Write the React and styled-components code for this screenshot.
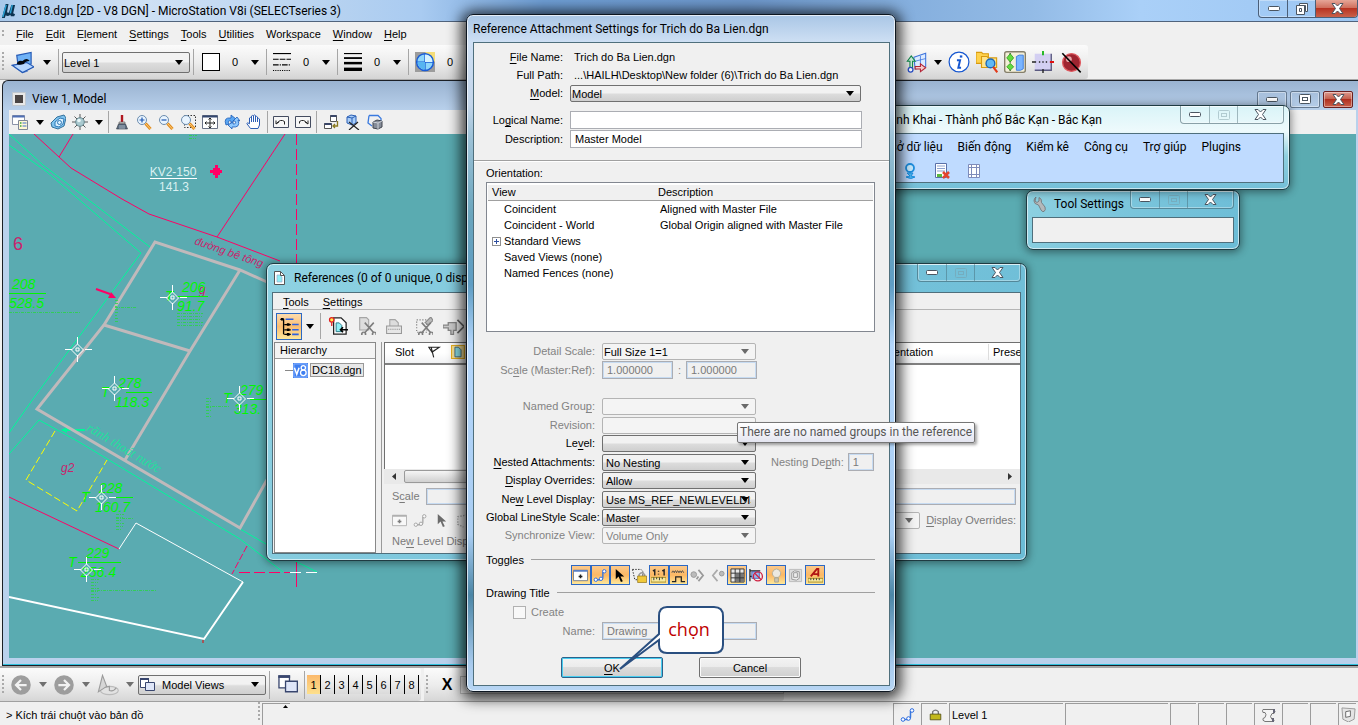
import React from 'react';
import styled, { createGlobalStyle, css } from 'styled-components';

const ui = '"Liberation Sans", Arial, sans-serif';
const caption = 'Roboto, "Noto Sans", sans-serif';

const GlobalStyle = createGlobalStyle`
  *, *::before, *::after { box-sizing: border-box; }
  body { margin: 0; background: #f0f0f0; font: 11px/16px ${ui}; color: #000; overflow: hidden; }
  button, input, select { font: inherit; color: inherit; margin: 0; }
  button { padding: 0; border: 0; background: none; }
  u { text-underline-offset: 2px; }
  svg { display: block; flex: none; }
`;

/* ---------- icons ---------- */

const glass = (
  <>
    <circle cx="6" cy="6" r="4.5" fill="#e8f4ff" stroke="#6b8cae" />
    <path d="M9.5 9.5l5 5.5" stroke="#e08a1e" strokeWidth="3" />
    <path d="M9.5 9.5l5 5.5" stroke="#ffd27a" strokeWidth="1" />
  </>
);
const smartLine = (
  <>
    <path d="M3 12.5h4.5q3 0 3-3V4" fill="none" stroke="#3b78dc" strokeWidth="1.5" />
    <circle cx="3" cy="12.5" r="1.8" fill="#fff" stroke="#2a6ae0" />
    <circle cx="8.5" cy="11.5" r="1.8" fill="#fff" stroke="#2a6ae0" />
    <circle cx="12" cy="3.5" r="1.8" fill="#fff" stroke="#2a6ae0" />
  </>
);
const scissors = (
  <path d="M6 5l8 9M14 5l-8 9M5 13.5a1.7 1.7 0 1 0 .1 0M14.5 13.5a1.7 1.7 0 1 0 .1 0" fill="none" stroke="#7d7d7d" strokeWidth="1.4" />
);
const wins = (
  <>
    <path d="M1.5 1.5h8v9h-8z" fill="#fff" stroke="#39466e" />
    <path d="M1 2h9" stroke="#39466e" strokeWidth="2" />
    <path d="M6.500 5.500h9v8h-9z" fill="#dfe6f8" stroke="#39466e" />
  </>
);

const icons = {
  app: (
    <>
      <path d="M5 1h3L6.500 9q0 2 2 1L11 2h4l-2 9 2 1-1 2h-3.500l-.5-1.500Q7 15 5 13l-1 3H1z" fill="#0d3350" />
      <path d="M5.500 2L2 15M12 2l-2 9" stroke="#2aa3d8" strokeWidth="1.500" fill="none" />
    </>
  ),
  level: (
    <>
      <path d="M1 10l5-1 5 5-3 1z" fill="#e8f1ff" stroke="#5b84c8" />
      <path d="M4 3l10-2v8L5 11z" fill="#6fb2f6" stroke="#2458b4" strokeWidth=".8" />
      <path d="M1 10l7 5 8-4-5-3z" fill="#b8d8ff" stroke="#2458b4" strokeWidth=".8" />
      <path d="M4 9q1-3 4-2 3-3 5 0-3 0-4 2-3 1-5 0z" fill="#05080f" />
    </>
  ),
  styles: (
    <g stroke="#000" strokeWidth="1">
      <path d="M0 .5h16" />
      <path d="M0 5.500h16" strokeDasharray="5 1" />
      <path d="M0 10.500h16" strokeDasharray="5 1 1 1" />
      <path d="M0 15.500h16" strokeDasharray="1 1" />
    </g>
  ),
  weights: (
    <g stroke="#000">
      <path d="M0 .5h16" />
      <path d="M0 4.500h16" strokeWidth="1.600" />
      <path d="M0 9h16" strokeWidth="2.200" />
      <path d="M0 14.500h16" strokeWidth="3" />
    </g>
  ),
  globe: (
    <>
      <path d="M0 0h16v16H0z" fill="#9c9c9c" />
      <path d="M8 0h8v8z" fill="#f4dd78" />
      <circle cx="8" cy="8" r="6.700" fill="#8fd7fa" stroke="#1a5cd6" strokeWidth="1.200" />
      <path d="M8 1.500v13M1.500 8h13" stroke="#1a5cd6" strokeWidth="1" />
      <path d="M8 8V2a6 6 0 0 1 6 6z" fill="#d7f2ff" />
      <path d="M8 8v6a6 6 0 0 1-6-6z" fill="#57b5f1" />
    </>
  ),
  acs: (
    <>
      <path d="M6 4l9-3v10l-8 2z" fill="#dcebff" stroke="#3b72dc" strokeWidth=".8" />
      <path d="M7 7l8-2M11 3v9" stroke="#3b72dc" strokeWidth=".6" />
      <path d="M3 12V7H1l3-4 3 4H5v5z" fill="#cfeedd" stroke="#108a4c" strokeWidth=".8" />
      <path d="M7 11h4V9l4 3-4 3v-2H7z" fill="#f7caca" stroke="#b32638" strokeWidth=".8" />
      <circle cx="3.500" cy="13.500" r="1.800" fill="#fff" stroke="#2a50c8" />
    </>
  ),
  info: (
    <>
      <circle cx="8" cy="8" r="7.200" fill="#fff" stroke="#1556d0" strokeWidth=".9" />
      <path d="M9.500 3.200v1.600" stroke="#1556d0" strokeWidth="1.800" />
      <path d="M6.500 6.700h2.300l-1.300 5.500h2" stroke="#1556d0" strokeWidth="1.400" fill="none" />
    </>
  ),
  folderFind: (
    <>
      <path d="M0 1h4l1 1h4v7H0z" fill="#ffd24c" stroke="#d89a10" strokeWidth=".8" />
      <path d="M4 4h4l1 1h6v7H4z" fill="#ffe48a" stroke="#d89a10" strokeWidth=".8" />
      <circle cx="10.500" cy="9" r="3.200" fill="#5fb9f5" stroke="#1c66b8" />
      <path d="M12.500 11.500l3 4" stroke="#e23a1a" strokeWidth="1.600" />
    </>
  ),
  panels: (
    <>
      <rect x=".5" y=".5" width="15" height="15" rx="1.500" fill="#f4efd8" stroke="#857f6a" />
      <path d="M4.500 1.500v13" stroke="#555" strokeDasharray="1 1" />
      <path d="M4.500 2l2.500 3-2.500 3L2 5zM4.500 9l2.500 2.500-2.500 2.500L2 11.500z" fill="#63db3f" stroke="#2a9b18" strokeWidth=".6" />
      <path d="M9 4l2-1h3v10l-2 1H9z" fill="#7ab5ff" stroke="#3f7fe0" strokeWidth=".7" />
    </>
  ),
  lockSquare: (
    <>
      <path d="M2 2h12v12H2z" fill="#d3cff2" />
      <path d="M2 14h12V2" fill="none" stroke="#5b5a80" />
      <path d="M0 8h3M8 13v3" stroke="#222" />
      <path d="M8 0v3" stroke="#12b312" strokeWidth="1.300" />
      <path d="M13 8h3" stroke="#e01010" strokeWidth="1.500" />
      <path d="M5 8h1M7.500 8h1M10 8h1" stroke="#222" />
    </>
  ),
  noBall: (
    <>
      <circle cx="8" cy="8" r="6.800" fill="#9e2430" stroke="#e05a60" />
      <circle cx="6" cy="5.500" r="2.200" fill="#e7a9ab" />
      <path d="M1 1l14 14.500" stroke="#000" strokeWidth="1.200" />
    </>
  ),
  viewAttr: (
    <>
      <path d="M.5 1.500h12v9H.5z" fill="#fff" stroke="#8b93a8" />
      <path d="M.5 2.500h12" stroke="#4f6fb5" strokeWidth="2" />
      <path d="M6.500 6.500h9v9h-9z" fill="#fff7d2" stroke="#7f8798" />
      <path d="M8 9h1.500M8 12h1.500" stroke="#39a339" strokeWidth="1.500" />
      <path d="M10.500 9h4M10.500 12h4" stroke="#3f6fd0" />
    </>
  ),
  render: (
    <>
      <path d="M1 9l6-6 7-2 2 3-2 8-6 3-6-2z" fill="#7fc3ee" stroke="#34719c" />
      <path d="M5 8l5-4 4 1-1 5-4 3-4-1z" fill="#d9f0ff" stroke="#2f7ab8" />
      <circle cx="9.500" cy="8.500" r="2" fill="none" stroke="#2f7ab8" />
    </>
  ),
  sun: (
    <>
      <path d="M8 0v16M0 8h16M2.500 2.500l11 11M13.500 2.500l-11 11" stroke="#585858" />
      <circle cx="8" cy="8" r="4.300" fill="#a9c9cf" stroke="#67878f" />
      <circle cx="7" cy="6.500" r="1.800" fill="#e8f6f8" />
    </>
  ),
  brush: (
    <>
      <path d="M8 1v7" stroke="#b01820" strokeWidth="2.400" />
      <path d="M5 8h6v2H5z" fill="#c9c9c9" stroke="#555" strokeWidth=".6" />
      <path d="M4.500 10h7l2 5h-11z" fill="#5a6c80" stroke="#2f3740" strokeWidth=".6" />
      <path d="M6 11v4M8 11v4M10 11v4" stroke="#c8d2dc" strokeWidth=".7" />
    </>
  ),
  zoomIn: <>{glass}<path d="M3.500 6h5M6 3.500v5" stroke="#1c55b0" strokeWidth="1.200" /></>,
  zoomOut: <>{glass}<path d="M3.500 6h5" stroke="#1c55b0" strokeWidth="1.200" /></>,
  zoomWin: <><path d="M4.500 1.500h11v12h-11z" fill="none" stroke="#333" strokeDasharray="1.500 1.500" />{glass}</>,
  fit: (
    <>
      <path d="M.5 1.500h15v13H.5z" fill="#fff" stroke="#6a7286" />
      <path d="M.5 2.500h15" stroke="#34476f" strokeWidth="2" />
      <path d="M8 4v10M3 9h10M6.500 5.500L8 4l1.500 1.500M6.500 12.500L8 14l1.500-1.500M4.500 7.500L3 9l1.500 1.500M11.500 7.500L13 9l-1.500 1.500" stroke="#222" fill="none" />
    </>
  ),
  rotate: (
    <>
      <path d="M2 11Q-1 3 7 4V1l5 4-5 4V7Q3 6 5 10z" fill="#5aa6f2" stroke="#1b5cb8" strokeWidth=".8" />
      <path d="M14 6q3 8-6 7v2l-4-4 5-3v2q4 0 2-3H9l4-4 3 4z" fill="#8ec8ff" stroke="#1b5cb8" strokeWidth=".8" />
    </>
  ),
  hand: <path d="M4.500 14.500L.8 9.500q.7-1.500 2.700.3V4q1-1.200 2 0V2q1-1.200 2 0v-.5q1-1.200 2 0V3q1-1.200 2 0v2q1-1.200 2 0v6l-1.500 3.500z M5.500 4v4M7.500 2v6M9.500 2.500V8M11.500 4v4" fill="#fff" stroke="#2c5db4" />,
  viewPrev: (
    <>
      <path d="M.5 2.500h15v11H.5z" fill="#f6f6f6" stroke="#444c60" />
      <path d="M3 10l3-2M3 10V6.500M3.500 9.500q4-5 8-2l0 3" fill="none" stroke="#222" />
    </>
  ),
  viewNext: (
    <>
      <path d="M.5 2.500h15v11H.5z" fill="#f6f6f6" stroke="#444c60" />
      <path d="M13 10l-3-2M13 10V6.500M12.500 9.500q-4-5-8-2l0 2" fill="none" stroke="#222" />
    </>
  ),
  copyView: (
    <>
      <path d="M7.500 1.500h6v6h-6zM1.500 9.500h7v5h-7z" fill="#fff" stroke="#555" />
      <path d="M1.500 10h7M7.500 2h6" stroke="#3a4668" strokeWidth="2" />
      <path d="M14.500 7v5h-4M12 10l-2 2 2 2" stroke="#8a7a22" fill="none" strokeWidth="1.300" />
    </>
  ),
  clip: (
    <>
      <path d="M2 3l4-2 5 1v7l-4 2-5-2z" fill="#a8cdf8" stroke="#2b5fb5" />
      <path d="M2 3l5 1v7M7 4l4-2" stroke="#2b5fb5" fill="none" />
      <path d="M4 8l10 8M13 8l-9 8" stroke="#222" strokeWidth="1.200" />
    </>
  ),
  clipMask: (
    <>
      <path d="M2 1.500h9l3 3V8M2 1.500L1 9l4 3" fill="none" stroke="#3a7adf" strokeWidth="1.300" />
      <path d="M6 8l4-2 5 1v6l-4 2-5-1z" fill="#858c98" stroke="#40454e" />
      <path d="M6 8l5 1v6M11 9l4-2" fill="none" stroke="#cdd1d8" />
    </>
  ),
  doc: (
    <>
      <path d="M2.500 1.500h6l4 4v9h-10z" fill="#fff" stroke="#555" />
      <path d="M5 5h3l2 2v5H5z" fill="#8ff0f6" stroke="#9ac" strokeWidth=".7" />
      <path d="M8.500 1.500v4h4" fill="none" stroke="#555" />
    </>
  ),
  tree: (
    <>
      <path d="M3.500 3v11" stroke="#000" />
      <path d="M1 2.500h3M4 6.500h5M4 10.500h5M4 14h5" stroke="#000" strokeWidth="1" />
      <path d="M6 6.500h2M6 10.500h2M6 14h2M1.500 2.500h2" stroke="#000" strokeWidth="2" />
      <path d="M5 2.500h6M10 6.500h5M10 10.500h5M10 14h5" stroke="#2f62e0" strokeWidth="1.200" />
    </>
  ),
  attach: (
    <>
      <path d="M4.500 1.500h6l4 4v9h-10z" fill="#fff" stroke="#222" />
      <path d="M6.500 5.500h2.500l2 2v5H6.500z" fill="#8ff0f6" stroke="#2c7f8c" strokeWidth=".8" />
      <path d="M16 11h-6M12 9l-2 2 2 2" stroke="#000" strokeWidth="1.300" fill="none" />
      <circle cx="3" cy="3" r="1.800" fill="#ffe94a" stroke="#e02020" />
      <path d="M3 5v3" stroke="#e02020" />
    </>
  ),
  cutDoc: <><path d="M1.500.5h6l2 2v9h-8z" fill="#ddd" stroke="#a5a5a5" />{scissors}</>,
  printDoc: (
    <>
      <path d="M4.500 1.500h5l3 3v4h-8z" fill="#ddd" stroke="#a5a5a5" />
      <path d="M1.500 7.500h14v7h-14z" fill="#e6e6e6" stroke="#999" />
      <path d="M3 10.500h11" stroke="#888" strokeDasharray="1 1" />
    </>
  ),
  cutBrush: (
    <>
      <path d="M1.500 2.500h9v11h-9z" fill="none" stroke="#777" strokeDasharray="1 1.500" />
      <path d="M9 5l5-5 2 3-4 4z" fill="#bbb" stroke="#8a8a8a" />
      {scissors}
    </>
  ),
  key: (
    <>
      <path d="M11 3l5 5-5 5" fill="none" stroke="#666" strokeWidth="1.300" />
      <path d="M0 7h4V5h6v6H8v3H6v-3H4V9H0z" fill="#c9c9c9" stroke="#858585" />
    </>
  ),
  flag: <path d="M1 1.500h13L5 7.500zM4 2l3 12" fill="none" stroke="#222" strokeWidth="1.400" />,
  docTab: (
    <>
      <path d="M.5.5h15v15H.5z" fill="#fbe59a" stroke="#e8b020" strokeWidth="1.500" />
      <path d="M4.500 2.500h4l3 3v8h-7z" fill="#8fe6ee" stroke="#39617a" />
    </>
  ),
  v8: (
    <>
      <path d="M0 0h16v16H0z" fill="#3f7ff0" />
      <path d="M1 1h14v14H1z" fill="none" stroke="#8db6ff" />
      <path d="M1.500 5l2.500 7 2.500-7" fill="none" stroke="#fff" strokeWidth="1.600" />
      <circle cx="11" cy="5" r="2.300" fill="none" stroke="#fff" strokeWidth="1.400" />
      <circle cx="11" cy="10.500" r="3" fill="none" stroke="#fff" strokeWidth="1.400" />
    </>
  ),
  display: (
    <>
      <path d="M.5 2.500h15v11H.5z" fill="#fff" stroke="#76808f" />
      <path d="M.5 3h15" stroke="#5a7fc4" strokeWidth="2" />
      <path d="M8 7v4M6 9h4" stroke="#222" strokeWidth="1.600" />
    </>
  ),
  snap: smartLine,
  pointer: <path d="M4 1v11l3-3 2.500 6 2-1-2.500-5h4z" fill="#000" />,
  rasterLock: (
    <>
      <path d="M.5 1.500h9l2 2v9H3z" fill="none" stroke="#222" strokeDasharray="1.500 1.500" />
      <path d="M7.500 9V7q3-4 6 0v2" fill="none" stroke="#9a9a9a" strokeWidth="1.500" />
      <path d="M6 8.500h9.500v7H6z" fill="#f1c93a" stroke="#8a6b10" strokeWidth=".7" />
    </>
  ),
  trueScale: (
    <>
      <path d="M2 3l2-1v6M12 3l2-1v6M8 3v1M8 6v1" stroke="#222" strokeWidth="1.500" fill="none" />
      <path d="M0 10h16v5H0z" fill="#f6e9a0" stroke="#a58d22" />
      <path d="M3 10v3M6 10v2M9 10v3M12 10v2" stroke="#333" />
    </>
  ),
  lineScale: (
    <>
      <path d="M1 5q1-4 2.500 0 1-4 2.500 0 1-4 2.500 0 1-4 2.500 0 1-4 2.500 0" fill="none" stroke="#444" />
      <path d="M1 14.500h4V9.500h6v5h4" fill="none" stroke="#222" strokeWidth="1.300" />
    </>
  ),
  clipBack: (
    <>
      <circle cx="4" cy="7" r="3" fill="#bbb" stroke="#999" />
      <path d="M9 2l5 6-5 6M9 9l-2 3" fill="none" stroke="#999" strokeWidth="1.800" />
    </>
  ),
  clipFront: (
    <>
      <circle cx="12.500" cy="6" r="2.500" fill="#bbb" stroke="#999" />
      <path d="M8 2L3 8l5 6" fill="none" stroke="#aaa" strokeWidth="1.800" />
    </>
  ),
  grid: (
    <>
      <path d="M1 1h14v14H1z" fill="#e8e8e8" stroke="#333" />
      <path d="M6 6h9v9H6z" fill="#777" />
      <path d="M5.500 1v14M10.500 1v14M1 5.500h14M1 10.500h14" stroke="#333" />
    </>
  ),
  noRaster: (
    <>
      <path d="M1 1v13M1 3h11M1 9h5" stroke="#222" strokeWidth="1.300" />
      <path d="M3 4h8v7H3z" fill="#9cb8f0" stroke="#2a4fa8" strokeWidth=".8" />
      <circle cx="9.500" cy="9" r="4.800" fill="none" stroke="#d02040" strokeWidth="1.400" />
      <path d="M6 5.500l7 7" stroke="#d02040" strokeWidth="1.400" />
    </>
  ),
  bulb: (
    <>
      <path d="M6 10Q3 7.500 3.500 5 5 1 8 1t4.500 4q.5 2.500-2.500 5z" fill="#ece9e0" stroke="#b5b09c" />
      <path d="M6 10.500h4V15H6z" fill="#c8c4b4" stroke="#aaa48c" />
    </>
  ),
  solid: (
    <>
      <path d="M1.500 1.500h13v13h-13z" fill="#ddd" stroke="#bbb" />
      <path d="M4 5l3-2 5 1v7l-3 2-5-1z" fill="#eee" stroke="#999" />
      <path d="M6 5h4v5H6z" fill="none" stroke="#999" />
    </>
  ),
  annot: (
    <>
      <path d="M3 9L9.500 1h1.500v8M6 6.500h5" fill="none" stroke="#b01414" strokeWidth="2" />
      <path d="M0 11h16v4H0z" fill="#f6e9a0" stroke="#a58d22" />
      <path d="M3 11v2M6 11v2M9 11v2M12 11v2" stroke="#333" />
    </>
  ),
  back: (
    <>
      <circle cx="8" cy="8" r="7.800" fill="#9d9d9d" />
      <path d="M12.500 8h-8M8 4L4 8l4 4" fill="none" stroke="#f2f2f2" strokeWidth="1.800" />
    </>
  ),
  forward: (
    <>
      <circle cx="8" cy="8" r="7.800" fill="#9d9d9d" />
      <path d="M3.500 8h8M8 4l4 4-4 4" fill="none" stroke="#f2f2f2" strokeWidth="1.800" />
    </>
  ),
  compass: (
    <>
      <ellipse cx="9" cy="12" rx="6.500" ry="3" fill="#e2e2e2" stroke="#bbb" strokeWidth=".8" />
      <path d="M4 10l5-1v3q3 1 5-2" fill="none" stroke="#999" strokeWidth=".8" />
      <path d="M1 13L4 1l3 8z" fill="#d6d6d6" stroke="#9a9a9a" strokeWidth=".8" />
    </>
  ),
  wins,
  wrench: <path d="M4 1L3 5l2 1.500L7 5V1.500q3 1 2.500 5L13 11q1 3-1 4.500-2 .5-3-1.500l-2.500-5Q2 8 2 5 2 2 4 1z" fill="#b4b8ba" stroke="#6c7073" strokeWidth=".8" />,
  person: (
    <>
      <circle cx="8" cy="5" r="4" fill="#c9ecff" stroke="#1d8fe0" strokeWidth="1.800" />
      <path d="M5 10h6l-2 3 4 1q-4 3-9 0l4-1z" fill="#49b7f4" stroke="#1d8fe0" />
    </>
  ),
  sheetX: (
    <>
      <path d="M1.500.5h11v14h-11z" fill="#fff" stroke="#5a70a8" />
      <path d="M3 3h8M3 5.500h8M3 8h8" stroke="#8fa3d0" />
      <path d="M3 11h5v3H3z" fill="#59b840" />
      <path d="M9 9l6 6M15 9l-6 6" stroke="#e2452e" strokeWidth="2.500" />
    </>
  ),
  sheetGrid: (
    <>
      <path d="M2.500 1.500h11v13h-11z" fill="#fff" stroke="#7f8cba" />
      <path d="M5.500 1v14M10.500 1v14M2 4.500h12M2 11.500h12" stroke="#7f8cba" />
    </>
  ),
  lock: (
    <>
      <path d="M4.500 8V4.500q3.500-4 7 0V8" fill="none" stroke="#777" strokeWidth="1.600" />
      <path d="M1.500 7.500h13v7h-13z" fill="#c2b81c" stroke="#4d4a10" />
    </>
  ),
  scroll: (
    <>
      <path d="M2 2.500h11q2 2 0 4l-2 0q-3 3 0 6h1q2 1 0 2H4q-3-1-2-3l2-1q2-3 0-5H2q-1-2 0-3z" fill="#f4f4f4" stroke="#777" />
      <path d="M13 2v4M12 11v4" stroke="#667" strokeWidth="2" />
    </>
  ),
  shield: (
    <>
      <path d="M1 1l14 1-1 11-6 3-6-3z" fill="#e4e4e4" stroke="#999" />
      <path d="M5 5l5-1v6l-5 1z" fill="#fafafa" stroke="#666" />
    </>
  ),
  fence: <path d="M13 2L3 4v8l6 3" fill="none" stroke="#777" strokeDasharray="1.500 1.500" strokeWidth="1.500" />,
};

const IconSvg = styled.svg`
  ${p => p.$faded && css`
    opacity: 0.55;
    filter: grayscale(1);
  `}
`;

const Icon = ({ name, size = 16, faded }) => (
  <IconSvg width={size} height={size} viewBox="0 0 16 16" $faded={faded} aria-hidden="true">
    {icons[name]}
  </IconSvg>
);

const Arrow = ({ color = '#000' }) => (
  <svg width="8" height="5" viewBox="0 0 8 5" aria-hidden="true">
    <path d="M0 0h8L4 5z" fill={color} />
  </svg>
);

// "&" marks the accelerator letter
const Label = ({ text }) => {
  const at = text.indexOf('&');
  if (at < 0) return text;
  return <>{text.slice(0, at)}<u>{text[at + 1]}</u>{text.slice(at + 2)}</>;
};

/* ---------- shared controls ---------- */

const ToolBtn = styled.button`
  display: flex;
  flex: none;
  align-items: center;
  justify-content: center;
  width: ${p => p.$w || 22}px;
  height: ${p => p.$h || 22}px;
`;

const Sep = styled.div`
  flex: none;
  width: 1px;
  height: ${p => p.$h || 22}px;
  margin: 0 ${p => p.$r ?? 2}px 0 ${p => p.$l ?? 2}px;
  background: #a6a6a6;
`;

const Grip = styled.div`
  flex: none;
  width: 2px;
  height: ${p => p.$h || 20}px;
  margin: 0 2px;
  background: repeating-linear-gradient(#aaa 0 2px, transparent 2px 4px);
`;

const Fill = styled.div`
  flex: 1;
`;

const Combo = styled.span`
  display: grid;
  grid-template-columns: auto 1fr 14px;
  align-items: center;
  flex: none;
  width: ${p => p.$w}px;
  height: ${p => p.$h || 17}px;
  border: 1px solid ${p => (p.$off ? '#b4b4b4' : '#707070')};
  border-radius: 2px;
  background: ${p => (p.$off ? '#f4f4f4' : 'linear-gradient(#f2f2f2 0 45%, #dcdcdc 55%, #cfcfcf)')};
  color: ${p => (p.$off ? '#838383' : '#000')};

  select {
    grid-area: 1 / 2 / 2 / 4;
    width: 100%;
    height: 15px;
    padding: 0 ${p => p.$right ?? 14}px 0 ${p => p.$pad ?? 4}px;
    appearance: none;
    border: 0;
    background: none;
    color: ${p => (p.$dark ? '#000' : 'inherit')};
    opacity: 1;
    overflow: hidden;
    white-space: nowrap;
  }
  > svg:last-child {
    grid-area: 1 / 3;
    pointer-events: none;
  }
`;

const ComboBox = ({ id, label, value, w, h, off, dark, pad, right, icon }) => (
  <Combo $w={w} $h={h} $off={off} $dark={dark} $pad={pad} $right={right}>
    {icon}
    <select id={id} aria-label={label} disabled={off} defaultValue={value}>
      <option>{value}</option>
    </select>
    <Arrow color={off ? '#6a6a6a' : '#000'} />
  </Combo>
);

const TextBox = styled.input`
  flex: none;
  width: ${p => p.$w}px;
  height: 18px;
  padding: 0 4px;
  border: 1px solid #abadb3;
  background: #fff;

  &:disabled {
    background: #f0f0f0;
    box-shadow: inset 0 0 0 1px #c6dbf2;
    color: #7a7a7a;
  }
`;

const Caps = styled.div`
  display: flex;
  align-self: flex-start;
  flex: none;
  height: ${p => p.$h || 18}px;
  border: 1px solid ${p => p.$line || 'rgba(60, 90, 100, 0.55)'};
  border-top: 0;
  border-radius: 0 0 4px 4px;
  overflow: hidden;
  box-shadow: inset 0 0 0 1px rgba(255, 255, 255, 0.35);

  button {
    display: flex;
    align-items: center;
    justify-content: center;
    width: 28px;
  }
  button + button {
    border-left: 1px solid ${p => p.$line || 'rgba(60, 90, 100, 0.4)'};
  }
  button:last-child {
    width: ${p => p.$close || 46}px;
    background: ${p => (p.$red ? 'linear-gradient(#e6a697, #d0705e 45%, #b83422 50%, #c9614a)' : 'none')};
  }
`;

const MinMark = () => (
  <svg width="12" height="5"><rect x=".5" y=".5" width="11" height="4" rx="1" fill="#fff" stroke="#4b5560" /></svg>
);
const MaxMark = ({ off }) => (
  <svg width="12" height="10" opacity={off ? 0.45 : 1}>
    <rect x=".5" y=".5" width="11" height="9" rx="1" fill={off ? 'none' : '#fff'} stroke={off ? '#7a98a0' : '#4b5560'} />
    <rect x="3.500" y="3.500" width="5" height="3" fill="none" stroke={off ? '#7a98a0' : '#4b5560'} />
  </svg>
);
const RestoreMark = () => (
  <svg width="12" height="12">
    <path d="M3.500.5h8v8h-2v-6h-6z" fill="#fff" stroke="#4b5560" />
    <path d="M.5 2.500h8v9h-8z" fill="#fff" stroke="#4b5560" />
    <path d="M3.500 5.500h2v3h-2z" fill="none" stroke="#4b5560" />
  </svg>
);
const CloseMark = () => (
  <svg width="13" height="11" viewBox="0 0 13 11">
    <path d="M1 .5h3l2.500 2.500L9 .5h3L8.500 5.500l3.500 5H9L6.500 8 4 10.500H1l3.500-5z" fill="#fff" stroke="#4b5560" />
  </svg>
);

const CaptionButtons = () => (
  <Caps>
    <button aria-label="Minimize"><MinMark /></button>
    <button aria-label="Maximize" disabled><MaxMark off /></button>
    <button aria-label="Close"><CloseMark /></button>
  </Caps>
);

const FloatWin = styled.section`
  position: absolute;
  left: ${p => p.$x}px;
  top: ${p => p.$y}px;
  width: ${p => p.$w}px;
  display: flex;
  flex-direction: column;
  padding: 0 5px 6px;
  border: 1px solid #1f3b42;
  border-radius: 7px;
  background: ${p => p.$bg || 'linear-gradient(120deg, #8fd2e2, #7cc6dc 40%, #6bbcd6)'};
  box-shadow: inset 0 0 0 1px rgba(255, 255, 255, 0.6), 0 1px 8px 1px rgba(0, 0, 0, 0.45);
`;

const WinTitle = styled.header`
  display: flex;
  align-items: center;
  gap: 6px;
  height: ${p => p.$h || 28}px;
  font: 12px/18px ${caption};
  white-space: nowrap;
`;

const Client = styled.div`
  display: flex;
  flex-direction: column;
  border: 1px solid #4f6f7c;
  background: #f0f0f0;
  overflow: hidden;
`;

/* ---------- main frame ---------- */

const Shell = styled.div`
  position: relative;
  display: flex;
  flex-direction: column;
  min-height: 100vh;
  overflow: hidden;
`;

const MainTitle = styled.header`
  display: flex;
  align-items: center;
  gap: 5px;
  height: 22px;
  border-bottom: 1px solid #50637c;
  background: linear-gradient(90deg, #a8c8ea, #cfe1f5 10%, #bcd5f0 22%, #a9cbf1 31%, #6f9fd6 40%, #6e98cc 55%, #84aedd 66%, #93bbe6 76%, #aad0f8 84%, #9cc6f2);
  font: 12px/20px ${caption};

  svg { margin-left: 1px; }
`;

const MenuBar = styled.nav`
  display: flex;
  align-items: center;
  height: 23px;
  gap: 12px;

  button { line-height: 20px; }
  button:first-of-type { margin-left: -2px; }
`;

const BarRow = styled.div`
  display: flex;
  height: 35px;
  border-bottom: 1px solid #a9a9a9;
`;

const ToolBar = styled.div`
  display: flex;
  align-items: center;
  width: 1088px;
  padding-right: 3px;
  border-radius: 0 3px 3px 0;
  background: linear-gradient(#fbfbfb, #ededed 50%, #d4d4d4);
`;

const Value = styled.span`
  flex: none;
  width: ${p => p.$w || 22}px;
  text-align: center;
`;

const Swatch = styled.span`
  width: 18px;
  height: 18px;
  border: 1px solid #000;
  background: #fff;
`;

const attrs = [
  { key: 'Color', mark: <Swatch /> },
  { key: 'Line style', mark: <Icon name="styles" size={18} /> },
  { key: 'Line weight', mark: <Icon name="weights" size={18} /> },
];

const MainToolBar = () => (
  <BarRow>
    <ToolBar>
      <Grip />
      <ToolBtn $w={32} aria-label="Active level"><Icon name="level" size={23} /></ToolBtn>
      <ToolBtn $w={18} aria-label="Level list"><Arrow /></ToolBtn>
      <Sep $h={26} $r={3} />
      <ComboBox label="Level" value="Level 1" w={128} h={21} pad={1} />
      <Sep $h={26} $l={3} $r={4} />
      {attrs.map(a => (
        <React.Fragment key={a.key}>
          <ToolBtn $w={26} aria-label={a.key}>{a.mark}</ToolBtn>
          <Value>0</Value>
          <ToolBtn $w={18} aria-label={`${a.key} list`}><Arrow /></ToolBtn>
          <Sep $h={26} />
        </React.Fragment>
      ))}
      <ToolBtn $w={28} aria-label="Transparency"><Icon name="globe" size={20} /></ToolBtn>
      <Value>0</Value>
      <Fill />
      <ToolBtn $w={28} aria-label="Auxiliary coordinates"><Icon name="acs" size={21} /></ToolBtn>
      <ToolBtn $w={15} aria-label="Coordinate list"><Arrow /></ToolBtn>
      {['info', 'folderFind', 'panels', 'lockSquare', 'noBall'].map(n => (
        <ToolBtn key={n} $w={28} aria-label={n}><Icon name={n} size={n === 'noBall' ? 21 : 22} /></ToolBtn>
      ))}
    </ToolBar>
  </BarRow>
);

/* ---------- view window ---------- */

const ViewWin = styled.section`
  display: flex;
  flex-direction: column;
  flex: 1;
  margin-left: 2px;
  padding: 0 2px 7px 6px;
  border: 1px solid #1b1f26;
  border-right: 0;
  border-radius: 6px 0 0 0;
  background: linear-gradient(#9ab3d1, #b9d1ec 30px);
  box-shadow: inset 0 -1px 0 #2fc0dc;
`;

const ViewTitle = styled.header`
  display: flex;
  align-items: center;
  gap: 6px;
  height: 29px;
  padding: 7px 3px 0 3px;
  font: 12px/18px ${caption};
`;

const ViewCaps = styled.div`
  display: flex;
  gap: 3px;
  margin-left: auto;

  button {
    display: flex;
    align-items: center;
    justify-content: center;
    width: 30px;
    height: 17px;
    border: 1px solid #64788f;
    border-radius: 2px;
    box-shadow: inset 0 0 0 1px rgba(255, 255, 255, 0.4);
  }
  button:last-child {
    border-color: #6b1f1f;
    background: linear-gradient(#dd9a8f, #c5614e 45%, #b03020 50%, #c9604a);
  }
`;

const ViewTools = styled.div`
  display: flex;
  align-items: center;
  height: 24px;
  background: #f0f0f0;
`;

const Drawing = styled.svg`
  flex: 1 0 523px;
  width: 100%;
  background: #5aabb1;
  overflow: hidden;
`;

const ViewBtns = ({ names }) => names.map(n => (
  <ToolBtn key={n} aria-label={n}><Icon name={n} /></ToolBtn>
));

const parcels = [
  { no: '208', area: '528.5', x: 12, y: 289, l: 9, r: 46, ax: 9 },
  { no: '206', area: '91.7', x: 182, y: 292, l: 177, r: 208, ax: 177, t: 165, ty: 301 },
  { no: '278', area: '118.3', x: 118, y: 388, l: 126, r: 152, ax: 115, t: 101, ty: 397 },
  { no: '279', area: '313.', x: 240, y: 395, l: 250, r: 267, ax: 234, t: 223, ty: 403 },
  { no: '228', area: '160.7', x: 99, y: 493, l: 113, r: 133, ax: 95, t: 81, ty: 502 },
  { no: '229', area: '256.4', x: 86, y: 558, l: 78, r: 121, ax: 81, t: 68, ty: 567 },
];

const markers = [[172, 297], [77, 349], [114, 388], [239, 398], [101, 497], [86, 569]];

// faint attribute stamps: x, y, width, number of lines
const stamps = [[9, 312, 71, 1], [177, 313, 26, 5], [115, 300, 4, 8], [115, 307, 22, 1], [206, 398, 6, 7], [206, 406, 24, 1], [116, 514, 8, 6], [116, 518, 18, 1], [91, 579, 8, 8], [91, 590, 66, 1], [189, 135, 8, 2]];

const MapView = () => (
  <Drawing role="img" aria-label="Cadastral map">
    <g transform="translate(-9 -134)" fill="none">
      <g stroke="#00f79a">
        <path d="M9 134l34 31 107 82M9 145l38 27 94 81-108 146-24 34" />
        <path d="M9 454l30-34 40 22 161 97 43 33M240 529l57 33 20 10" />
      </g>
      <path d="M62 430h23" stroke="#00f79a" strokeWidth="2" />
      <path d="M61 430l6-3v6z" fill="#00f79a" />
      <g stroke="#ff0066">
        <path d="M34 134l37 34 51 31 27 15 68 23 63 24M73 134l-14 23M217 237l68-103" />
        <path d="M296.500 134v130" strokeDasharray="11 4" />
        <path d="M296.500 562v25" />
        <path d="M239 572.500h57" strokeDasharray="11 4" />
        <path d="M9 497l110 52" />
        <path d="M247 546l-15 28" strokeDasharray="7 2" />
        <path d="M96 289l14 5" strokeWidth="2" />
      </g>
      <path d="M108 298l8 0-5-6z" fill="#ff0066" />
      <path d="M215 165h3v3h2v2h2v3h-2v2h-2v3h-3v-3h-2v-2h-3v-3h3v-2h2z" fill="#ff0066" />
      <path d="M119 549l17-26 107 59M290 572.500h11M306 572.500h11" stroke="#fff" />
      <path d="M243 582l-39 57-195-42" stroke="#fff" strokeWidth="2" />
      <path d="M203 640v3" stroke="#e00" />
      <g stroke="#c0b9bb" strokeWidth="3">
        <path d="M267 282l-27-12-85-28-51 83-67 84 203 119 28-50" />
        <path d="M240 270l-50 81-65 109M104 325l86 26" />
      </g>
      <path d="M55 431l-29 49 51 31 30-51" stroke="#ffff00" strokeDasharray="7 3" />
      <g stroke="#25d83c" opacity=".75" strokeDasharray="3 1 1 1">
        {stamps.flatMap(([x, y, w, n]) => Array.from({ length: n }, (_, i) => (
          <path key={`${x}-${y}-${i}`} d={`M${x} ${y + i * 3 + 0.5}h${w - (i % 3)}`} />
        )))}
      </g>
    </g>
    <g transform="translate(-9 -134)" fontFamily="Liberation Sans, Arial, sans-serif" fontSize="12">
      <g fill="#d9f1f2" textAnchor="middle">
        <text x="173" y="176">KV2-150</text>
        <text x="174" y="191">141.3</text>
        <path d="M150 178.500h47" stroke="#fff" />
      </g>
      <g fill="#c9246c">
        <text x="13" y="250" fontSize="18">6</text>
        <text x="61" y="472" fontStyle="italic">g2</text>
        <text x="199" y="294" fontStyle="italic">g</text>
        <text transform="translate(194 244) rotate(19)" fontStyle="italic" fontSize="11">đường bê tông</text>
      </g>
      <text transform="translate(86 430) rotate(31)" fontFamily="Liberation Serif, serif" fontStyle="italic" fontSize="13" fill="#1fe09c">rãnh thoát nước</text>
      <g fill="#00f800" fontStyle="italic" fontSize="14" fontFamily="Liberation Sans">
        {parcels.map(p => (
          <g key={p.no}>
            <text x={p.x} y={p.y}>{p.no}</text>
            <text x={p.ax} y={p.y + 19}>{p.area}</text>
            {p.t && <text x={p.t} y={p.ty}>T</text>}
            <path d={`M${p.l} ${p.y + 4.5}h${p.r - p.l}`} stroke="#00f800" />
          </g>
        ))}
      </g>
      <g stroke="#fff" fill="none">
        {markers.map(([x, y]) => (
          <path key={x} d={`M${x + 0.5} ${y - 12}v7l-6 6 6 6 6-6-6-6M${x - 12} ${y + 0.5}h7m13 0h7M${x + 0.5} ${y + 6}v7M${x - 1} ${y - 1}h3v3h-3z`} />
        ))}
      </g>
    </g>
  </Drawing>
);

const ViewWindow = () => (
  <ViewWin>
    <ViewTitle>
      <svg width="14" height="14"><path d="M.5.5h13v13H.5z" fill="#e8e8e8" stroke="#c0c8d0" /><path d="M3 3h8v8H3z" fill="#4a4545" /></svg>
      View 1, Model
      <ViewCaps>
        <button aria-label="Minimize view"><MinMark /></button>
        <button aria-label="Maximize view"><MaxMark /></button>
        <button aria-label="Close view"><CloseMark /></button>
      </ViewCaps>
    </ViewTitle>
    <ViewTools>
      <ToolBtn aria-label="View attributes"><Icon name="viewAttr" /></ToolBtn>
      <ToolBtn $w={17} aria-label="Attribute list"><Arrow /></ToolBtn>
      <ToolBtn $w={20} aria-label="Display style"><Icon name="render" /></ToolBtn>
      <ToolBtn $w={23} aria-label="Brightness"><Icon name="sun" /></ToolBtn>
      <ToolBtn $w={15} aria-label="Brightness list"><Arrow /></ToolBtn>
      <Sep />
      <ViewBtns names={['brush', 'zoomIn', 'zoomOut', 'zoomWin', 'fit', 'rotate', 'hand']} />
      <Sep />
      <ViewBtns names={['viewPrev', 'viewNext']} />
      <Sep $r={3} />
      <ViewBtns names={['copyView', 'clip', 'clipMask']} />
    </ViewTools>
    <MapView />
  </ViewWin>
);

/* ---------- references window ---------- */

const RefMenu = styled.nav`
  display: flex;
  align-items: center;
  gap: 14px;
  height: 17px;
  padding: 2px 10px 0;
  border-bottom: 1px solid #b5b5b5;
`;

const RefTools = styled.div`
  display: flex;
  align-items: center;
  height: 32px;
  padding: 0 3px;
`;

const OnBtn = styled(ToolBtn)`
  border: 1px solid #2c68c4;
  background: linear-gradient(#fcdcae, #fbbd72 50%, #fde79a);
`;

const RefBody = styled.div`
  display: grid;
  grid-template-columns: 103px 1fr;
  column-gap: 5px;
  height: 211px;
`;

const Hierarchy = styled.div`
  border: 1px solid #888;
  background: #fff;
  margin-left: 1px;

  h2 {
    margin: 0;
    padding-left: 5px;
    border-bottom: 1px solid #999;
    background: #f3f3f3;
    font: inherit;
    line-height: 15px;
  }
`;

const TreeItem = styled.div`
  display: flex;
  align-items: center;
  gap: 2px;
  height: 22px;
  padding-left: 10px;

  &::before {
    content: '';
    width: 8px;
    margin-right: -2px;
    border-top: 1px solid #888;
  }
  span {
    padding: 0 1px;
    border: 1px solid #999;
    background: #e8e8e8;
    line-height: 12px;
  }
`;

const RefPane = styled.div`
  border-left: 1px solid #9a9a9a;
  padding-left: 2px;
  min-width: 0;
`;

const RefTable = styled.div`
  height: 127px;
  border: 1px solid #707070;
  border-width: 1px 0 0 1px;
  background: #fff;
`;

const HeadRow = styled.div`
  display: flex;
  align-items: center;
  height: 22px;
  padding: 0 0 2px 10px;
  border-bottom: 2px solid #808080;
  background: linear-gradient(#fff 50%, #f1f2f4);
  overflow: hidden;

  span:nth-of-type(2) {
    margin-left: auto;
    padding-right: 55px;
    border-right: 1px solid #ddd;
  }
  span:nth-of-type(3) {
    width: 31px;
    padding-left: 4px;
    overflow: hidden;
  }
  svg { margin-left: 14px; }
  svg + svg { margin-left: 10px; }
`;

const HScroll = styled.div`
  display: flex;
  align-items: center;
  justify-content: space-between;
  height: 15px;
  padding: 0 8px;
  background: #e9e9e9;

  i {
    flex: 1;
    height: 13px;
    margin: 0 450px 0 8px;
    border: 1px solid #9a9a9a;
    border-radius: 2px;
    background: linear-gradient(#f5f5f5, #d0d0d0);
  }
`;

const RefFoot = styled.div`
  display: flex;
  align-items: center;
  gap: 6px;
  height: ${p => p.$h || 24}px;
  padding: 0 4px 0 8px;
  color: #7a7a7a;

  input { flex: 1; width: auto; height: 17px; }
  label { white-space: nowrap; }
`;

const References = () => (
  <FloatWin $x={266} $y={263} $w={761}>
    <WinTitle $h={28}>
      <Icon name="doc" />
      <Fill>References (0 of 0 unique, 0 displayed)</Fill>
      <CaptionButtons />
    </WinTitle>
    <Client>
      <RefMenu>
        <button><Label text="&Tools" /></button>
        <button><Label text="&Settings" /></button>
      </RefMenu>
      <RefTools>
        <OnBtn $w={26} $h={27} aria-label="Show hierarchy"><Icon name="tree" size={21} /></OnBtn>
        <ToolBtn $w={15} aria-label="Hierarchy options"><Arrow /></ToolBtn>
        <Sep $h={26} $l={3} />
        <ToolBtn $w={30} aria-label="Attach reference"><Icon name="attach" size={20} /></ToolBtn>
        <ToolBtn $w={28} aria-label="Detach"><Icon name="cutDoc" size={18} /></ToolBtn>
        <ToolBtn $w={24} aria-label="Reload"><Icon name="printDoc" size={17} /></ToolBtn>
        <ToolBtn $w={38} aria-label="Clip"><Icon name="cutBrush" size={18} /></ToolBtn>
        <ToolBtn $w={20} aria-label="Mask"><Icon name="key" size={21} /></ToolBtn>
      </RefTools>
      <RefBody>
        <Hierarchy>
          <h2>Hierarchy</h2>
          <TreeItem><Icon name="v8" size={15} /><span>DC18.dgn</span></TreeItem>
        </Hierarchy>
        <RefPane>
          <RefTable>
            <HeadRow>
              <span>Slot</span>
              <Icon name="flag" size={13} />
              <Icon name="docTab" size={14} />
              <span>Orientation</span>
              <span>Presentation</span>
            </HeadRow>
          </RefTable>
          <HScroll>
            <svg width="4" height="7"><path d="M4 0v7L0 3.500z" fill="#333" /></svg>
            <i />
            <svg width="4" height="7"><path d="M0 0v7l4-3.500z" fill="#333" /></svg>
          </HScroll>
          <RefFoot>
            <label htmlFor="ref-scale"><Label text="S&cale" /></label>
            <TextBox id="ref-scale" disabled />
          </RefFoot>
          <RefFoot>
            {['display', 'snap', 'pointer', 'fence'].map(n => <Icon key={n} name={n} faded size={15} />)}
            <Fill />
            <ComboBox id="ref-over" value="" w={60} off />
            <label htmlFor="ref-over"><Label text="&Display Overrides:" /></label>
          </RefFoot>
          <RefFoot $h={18}><label><Label text="Ne&w Level Display:" /></label></RefFoot>
        </RefPane>
      </RefBody>
    </Client>
  </FloatWin>
);

/* ---------- tool settings and cadastral tool window ---------- */

const ToolBody = styled.div`
  height: 24px;
`;

const ToolSettings = () => (
  <FloatWin $x={1026} $y={190} $w={214}>
    <WinTitle $h={26}>
      <Icon name="wrench" />
      <Fill>Tool Settings</Fill>
      <CaptionButtons />
    </WinTitle>
    <Client><ToolBody /></Client>
  </FloatWin>
);

const GisMenu = styled.nav`
  display: flex;
  justify-content: flex-end;
  gap: 15px;
  height: 26px;
  padding-right: 42px;
  background: #bfdbff;
  font: 12px/26px ${caption};
  white-space: nowrap;
`;

const GisTools = styled.div`
  display: flex;
  justify-content: flex-end;
  gap: 10px;
  height: 22px;
  padding-right: 298px;
  background: #bfdbff;
`;

const GisTitle = styled.div`
  flex: 1;
  padding-right: 72px;
  text-align: right;
`;

const GisWindow = () => (
  <FloatWin $x={780} $y={105} $w={510} $bg="linear-gradient(#d9f4f8, #eefafc 25px, #8fd0e0 50px, #74bfd8)">
    <WinTitle $h={27}>
      <GisTitle>Minh Khai - Thành phố Bắc Kạn - Bắc Kạn</GisTitle>
      <CaptionButtons />
    </WinTitle>
    <Client>
      <GisMenu>
        {['Cơ sở dữ liệu', 'Biến động', 'Kiểm kê', 'Công cụ', 'Trợ giúp', 'Plugins'].map(t => <button key={t}>{t}</button>)}
      </GisMenu>
      <GisTools>
        {['person', 'sheetX', 'sheetGrid'].map(n => <ToolBtn key={n} aria-label={n}><Icon name={n} /></ToolBtn>)}
      </GisTools>
    </Client>
  </FloatWin>
);

/* ---------- attachment dialog ---------- */

const DialogWin = styled(FloatWin)`
  padding: 0 5px 5px 6px;
  border-color: #0d1620;
  background: linear-gradient(#a9c6e6, #cfe0f4 28px, #c3d5ea 90px, #9fc3d8 120px, #6aa5bd 200px, #5f9dc4 270px, #b4d6fb 330px, #a9cdf2 520px, #4b86a6 580px, #a9cbee 650px, #b8d6f4);
  box-shadow: inset 0 0 0 1px rgba(255, 255, 255, 0.7), 0 2px 14px 5px rgba(0, 0, 0, 0.75);
`;

const Top = styled.div`
  padding: 5px 0 12px;
  border-bottom: 1px solid #a0a0a0;
  box-shadow: 0 1px 0 #fff;
`;

const Bottom = styled.div`
  padding: 4px 14px 7px 12px;
`;

const Row = styled.div`
  display: flex;
  align-items: center;
  height: 18px;
  margin-top: ${p => p.$gap || 0}px;
  color: ${p => (p.$off ? '#838383' : '#000')};
  white-space: nowrap;

  > label:first-child, > span:first-child {
    flex: none;
    width: ${p => p.$label || 109}px;
    margin-right: 7px;
    text-align: right;
  }
`;

const TopRow = styled(Row).attrs({ $label: 89 })``;

const PlainText = styled.span`
  padding-left: 4px;
`;

const OrientList = styled.div`
  height: 150px;
  margin-top: 1px;
  padding: 2px 1px;
  border: 1px solid #828790;
  background: #fff;

  table { width: 100%; border-collapse: collapse; table-layout: fixed; }
  th {
    padding: 0 0 0 4px;
    border-bottom: 1px solid #a0a0a0;
    background: #f0f0f0;
    font-weight: normal;
    text-align: left;
    line-height: 15px;
  }
  th:first-child { width: 166px; }
  td { padding: 0 0 0 6px; height: 16px; line-height: 16px; }
  td:first-child { padding-left: 16px; }
`;

const PlusBox = styled.button`
  display: inline-block;
  width: 9px;
  height: 9px;
  margin: 0 3px 0 -12px;
  border: 1px solid #8f8f8f;
  background:
    linear-gradient(#2f4f9f, #2f4f9f) center / 5px 1px no-repeat,
    linear-gradient(#2f4f9f, #2f4f9f) center / 1px 5px no-repeat, #fff;
`;

const Legend = styled.div`
  display: flex;
  align-items: center;
  gap: 7px;
  height: 11px;
  margin-top: ${p => p.$gap}px;

  &::after {
    content: '';
    flex: 1;
    border-top: 1px solid #a0a0a0;
  }
`;

const Toggles = styled.div`
  display: grid;
  grid-template-columns: repeat(13, 1fr);
  width: 254px;
  height: 20px;
  margin-left: 85px;
`;

const Toggle = styled.button`
  display: flex;
  align-items: center;
  justify-content: center;
  ${p => p.$on && css`
    border: 1px solid #2c68c4;
    background: linear-gradient(#fbc98c, #fcb864 50%, #fde79a);
  `}
`;

const Check = styled.label`
  display: flex;
  align-items: center;
  gap: 5px;
  height: 14px;
  margin: 7px 0 3px 27px;
  color: #838383;

  input {
    width: 13px;
    height: 13px;
    appearance: none;
    border: 1px solid #b1b1b1;
    background: #f8f8f8;
  }
`;

const Actions = styled.div`
  display: flex;
  gap: 36px;
  margin: 17px 0 0 75px;
`;

const PushButton = styled.button`
  width: 102px;
  height: 21px;
  border: 1px solid ${p => (p.$main ? '#2c628b' : '#707070')};
  border-radius: 2px;
  background: linear-gradient(#f3f3f3, #ebebeb 50%, #dcdcdc 50%, #cfcfcf);
  box-shadow: inset 0 0 0 1px ${p => (p.$main ? '#48cdf0' : '#fbfbfb')};
`;

const toggleList = [
  ['display', 1], ['snap', 1], ['pointer', 1], ['rasterLock', 0], ['trueScale', 1], ['lineScale', 1], ['clipBack', 0],
  ['clipFront', 0], ['grid', 1], ['noRaster', 0], ['bulb', 1], ['solid', 0], ['annot', 1],
];

const combos = [
  { id: 'group', text: 'Named Grou&p:', value: '', off: true, gap: 18 },
  { id: 'rev', text: 'Revision:', value: '', off: true, gap: 1 },
  { id: 'lev', text: 'Le&vel:', value: '' },
  { id: 'nest', text: '&Nested Attachments:', value: 'No Nesting', gap: 1 },
  { id: 'over', text: '&Display Overrides:', value: 'Allow' },
  { id: 'newlev', text: 'Ne&w Level Display:', value: 'Use MS_REF_NEWLEVELDISPLAY', gap: 1, right: 4 },
  { id: 'lstyle', text: 'Global LineStyle Scale:', value: 'Master' },
  { id: 'sync', text: 'Synchronize View:', value: 'Volume Only', off: true },
];

const NestDepth = styled.div`
  display: flex;
  align-items: center;
  gap: 4px;
  margin-left: 15px;
  color: #838383;
`;

const AttachDialog = () => (
  <DialogWin as="form" $x={466} $y={14} $w={430} onSubmit={e => e.preventDefault()}>
    <WinTitle $h={27}>Reference Attachment Settings for Trich do Ba Lien.dgn</WinTitle>
    <Client>
      <Top>
        <TopRow><span><Label text="&File Name:" /></span><PlainText>Trich do Ba Lien.dgn</PlainText></TopRow>
        <TopRow><span>Full Path:</span><PlainText>...\HAILH\Desktop\New folder (6)\Trich do Ba Lien.dgn</PlainText></TopRow>
        <TopRow>
          <label htmlFor="model"><Label text="&Model:" /></label>
          <ComboBox id="model" value="Model" w={291} pad={1} />
        </TopRow>
        <TopRow $gap={9}>
          <label htmlFor="logical"><Label text="Lo&gical Name:" /></label>
          <TextBox id="logical" $w={292} />
        </TopRow>
        <TopRow $gap={1}>
          <label htmlFor="desc">Description:</label>
          <TextBox id="desc" $w={292} defaultValue="Master Model" />
        </TopRow>
      </Top>
      <Bottom>
        <div>Orientation:</div>
        <OrientList>
          <table>
            <thead><tr><th>View</th><th>Description</th></tr></thead>
            <tbody>
              <tr><td>Coincident</td><td>Aligned with Master File</td></tr>
              <tr><td>Coincident - World</td><td>Global Origin aligned with Master File</td></tr>
              <tr><td><PlusBox type="button" aria-label="Expand" />Standard Views</td><td /></tr>
              <tr><td>Saved Views (none)</td><td /></tr>
              <tr><td>Named Fences (none)</td><td /></tr>
            </tbody>
          </table>
        </OrientList>
        <Row $gap={10} $off>
          <label htmlFor="detail">Detail Scale:</label>
          <ComboBox id="detail" value="Full Size 1=1" w={154} off dark pad={1} />
        </Row>
        <Row $gap={1} $off>
          <label htmlFor="sm"><Label text="Sc&ale (Master:Ref):" /></label>
          <TextBox id="sm" $w={71} disabled defaultValue="1.000000" />
          <Value $w={13}>:</Value>
          <TextBox aria-label="Reference scale" $w={71} disabled defaultValue="1.000000" />
        </Row>
        {combos.map(c => (
          <Row key={c.id} $gap={c.gap} $off={c.off}>
            <label htmlFor={c.id}><Label text={c.text} /></label>
            <ComboBox id={c.id} value={c.value} w={154} off={c.off} pad={3} right={c.right} />
            {c.id === 'nest' && (
              <NestDepth>
                <label htmlFor="depth"><Label text="Nesting De&pth:" /></label>
                <TextBox id="depth" $w={26} disabled defaultValue="1" />
              </NestDepth>
            )}
          </Row>
        ))}
        <Legend $gap={10}>Toggles</Legend>
        <Toggles>
          {toggleList.map(([n, on]) => <Toggle type="button" key={n} $on={on} aria-label={n}><Icon name={n} size={15} /></Toggle>)}
        </Toggles>
        <Legend $gap={2}>Drawing Title</Legend>
        <Check><input type="checkbox" disabled />Create</Check>
        <Row $off>
          <label htmlFor="dname">Name:</label>
          <TextBox id="dname" $w={155} disabled defaultValue="Drawing" />
        </Row>
        <Actions>
          <PushButton $main><Label text="&OK" /></PushButton>
          <PushButton type="button">Cancel</PushButton>
        </Actions>
      </Bottom>
    </Client>
  </DialogWin>
);

const Tooltip = styled.div`
  position: absolute;
  left: 737px;
  top: 422px;
  padding: 0 2px;
  border: 1px solid #767676;
  border-radius: 2px;
  background: linear-gradient(#fff, #e4e5f0);
  box-shadow: 2px 2px 3px rgba(0, 0, 0, 0.35);
  color: #575757;
  font: 12px/19px ${caption};
  white-space: nowrap;
`;

const Callout = styled.svg`
  position: absolute;
  left: 614px;
  top: 603px;
  pointer-events: none;
`;

/* ---------- bottom bars ---------- */

const NavRow = styled.div`
  display: flex;
  gap: 3px;
  height: 36px;
  border-top: 2px solid #a7a7a7;
  border-bottom: 1px solid #a0a0a0;
`;

const NavBar = styled.div`
  display: flex;
  align-items: center;
  width: ${p => p.$w}px;
  border-radius: 0 3px 3px 0;
  background: linear-gradient(#fbfbfb, #ededed 50%, #d6d6d6);
`;

const ViewToggle = styled.button`
  width: 14px;
  height: 19px;
  border-right: 1px solid #000;
  background: ${p => (p.$on ? 'linear-gradient(#fbb96c, #fde08c)' : 'linear-gradient(#f6f6f6, #dadada)')};
`;

const KeyIn = styled.input`
  flex: 1;
  height: 18px;
  margin-left: 5px;
  border: 1px solid #bbb;
  background: #eee;
`;

const BigX = styled.b`
  width: 16px;
  margin-left: 9px;
  text-align: center;
  font-size: 16px;
`;

const Status = styled.footer`
  display: flex;
  height: 23px;
  align-items: stretch;
`;

const Prompt = styled.div`
  flex: none;
  width: 256px;
  padding-left: 6px;
  line-height: 27px;
`;

const Cell = styled.div`
  display: flex;
  flex: none;
  align-items: center;
  justify-content: center;
  width: ${p => p.$w || 26}px;
  margin: 1px 2px 0 0;
  padding-left: 2px;
  border: 1px solid #9c9c9c;
  border-width: 1px 0 0 1px;
  ${p => p.$text && 'justify-content: flex-start;'}
`;

const ArrowCell = styled(Cell)`
  align-items: flex-start;
  justify-content: flex-end;
  padding: 1px 2px 0 0;
`;

export default function App() {
  return (
    <Shell>
      <GlobalStyle />
      <MainTitle>
        <Icon name="app" size={15} />
        <Fill>DC18.dgn [2D - V8 DGN] - MicroStation V8i (SELECTseries 3)</Fill>
        <Caps $line="#4b5f78" $close={42} $red>
          <button aria-label="Minimize"><MinMark /></button>
          <button aria-label="Restore"><RestoreMark /></button>
          <button aria-label="Close"><CloseMark /></button>
        </Caps>
      </MainTitle>
      <MenuBar>
        <Grip $h={8} />
        {['&File', '&Edit', 'E&lement', '&Settings', '&Tools', '&Utilities', 'Wor&kspace', '&Window', '&Help'].map(t => (
          <button key={t}><Label text={t} /></button>
        ))}
      </MenuBar>
      <MainToolBar />
      <ViewWindow />
      <NavRow>
        <NavBar $w={421}>
          <Grip />
          <ToolBtn $w={30} aria-label="Back"><Icon name="back" size={20} /></ToolBtn>
          <ToolBtn $w={14} aria-label="Back list"><Arrow color="#707070" /></ToolBtn>
          <ToolBtn $w={28} aria-label="Forward"><Icon name="forward" size={20} /></ToolBtn>
          <ToolBtn $w={16} aria-label="Forward list"><Arrow color="#707070" /></ToolBtn>
          <ToolBtn $w={28} aria-label="Set up"><Icon name="compass" size={22} /></ToolBtn>
          <ToolBtn $w={16} aria-label="Set up list"><Arrow color="#707070" /></ToolBtn>
          <ComboBox label="View group" value="Model Views" w={128} h={20} pad={7} icon={<Icon name="wins" />} />
          <Sep $h={28} $l={3} />
          <ToolBtn $w={30} aria-label="Manage view groups"><Icon name="wins" size={21} /></ToolBtn>
          <Sep $h={28} />
          {[1, 2, 3, 4, 5, 6, 7, 8].map(n => <ViewToggle key={n} $on={n === 1}>{n}</ViewToggle>)}
        </NavBar>
        <NavBar $w={360}>
          <Grip />
          <BigX>X</BigX>
          <KeyIn aria-label="X coordinate" />
        </NavBar>
      </NavRow>
      <Status>
        <Prompt>&gt; Kích trái chuột vào bản đồ</Prompt>
        <Grip />
        <ArrowCell $w={28}><svg width="5" height="3"><path d="M0 3h5L2.500 0z" /></svg></ArrowCell>
        <Fill />
        <Cell><Icon name="snap" /></Cell>
        <Cell><Icon name="lock" size={13} /></Cell>
        <Cell $w={114} $text>Level 1</Cell>
        <Cell $w={103} />
        <Cell />
        <Cell />
        <Cell />
        <Cell><Icon name="scroll" /></Cell>
        <Cell />
        <Cell />
        <Cell $w={18}><Icon name="shield" size={15} /></Cell>
      </Status>
      <ToolSettings />
      <GisWindow />
      <References />
      <AttachDialog />
      <Tooltip role="tooltip">There are no named groups in the reference</Tooltip>
      <Callout width="114" height="72">
        <path d="M53 4h47q9 0 9 9v29q0 8-9 8H53q-8 0-8-8v-5L6 66l39-35V13q0-9 8-9z" fill="#fff" stroke="#2a4f80" strokeWidth="2" />
        <text x="75" y="33" textAnchor="middle" fontFamily="Open Sans, sans-serif" fontSize="18" fill="#c00000">chọn</text>
      </Callout>
    </Shell>
  );
}
